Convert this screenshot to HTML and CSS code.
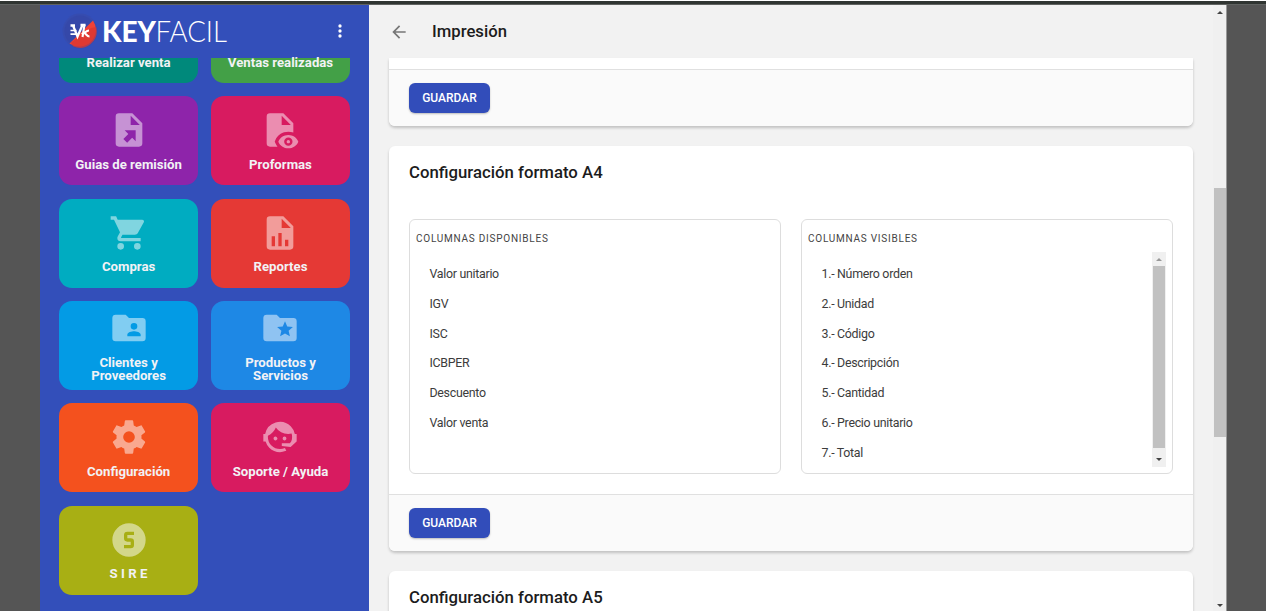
FILE: index.html
```html
<!DOCTYPE html>
<html lang="es">
<head>
<meta charset="utf-8">
<title>Keyfacil - Impresión</title>
<link rel="stylesheet" href="styles.css">
</head>
<body>
<div class="topline"></div>
<div class="app">
  <aside class="sidebar">
    <header class="brand">
      <svg class="emblem" width="36" height="36" viewBox="0 0 36 36">
        <circle cx="18" cy="18" r="17.500" fill="#384ba8" opacity=".6"/>
        <circle cx="18" cy="18" r="15.500" fill="#3546a5" opacity=".6"/>
        <path d="M31 7.500A16.700 16.700 0 0 1 7.500 30.500z" fill="#f04236"/>
        <path d="M29 15l5.200-1A16.700 16.700 0 0 1 11 33.200L9 29.500z" fill="#d93731" opacity=".75"/>
        <g fill="none" stroke="#fff">
          <path d="M11 12.500l4.500 11L20.500 12M18.500 12h5M8.500 12.500h4.500" stroke-width="2.300"/>
          <path d="M8.500 17.500h6M8.500 21.200h6.500" stroke-width="1.700"/>
          <path d="M22.500 11.500L20.500 24M27 17.500c-2 0-3.500 1.500-5 2.500 2 0 2.500 3.500 5.500 3.500" stroke-width="2.100"/>
        </g>
      </svg>
      <svg class="wordmark" width="128" height="40" viewBox="0 0 128 40">
        <text class="word-bold" x="0" y="30.500" textLength="54" lengthAdjust="spacingAndGlyphs">KEY</text>
        <text class="word-light" x="53.500" y="30.500" textLength="71.500" lengthAdjust="spacingAndGlyphs">FACIL</text>
      </svg>
      <svg class="dots" width="20" height="20" viewBox="0 0 24 24"><path d="M12 16a2 2 0 1 1 0 4 2 2 0 0 1 0-4m0-6a2 2 0 1 1 0 4 2 2 0 0 1 0-4m0-6a2 2 0 1 1 0 4 2 2 0 0 1 0-4z"/></svg>
    </header>
    <nav class="tiles">
      <a class="tile cut teal"><span>Realizar venta</span></a>
      <a class="tile cut green"><span>Ventas realizadas</span></a>
      <a class="tile purple"><svg viewBox="0 0 24 24"><path fill-rule="evenodd" d="M14 2H6a2 2 0 0 0-2 2v16a2 2 0 0 0 2 2h12a2 2 0 0 0 2-2V8l-6-6m-1 7V3.500L18.500 9H13M16 12.200H9.400l2.200 2.200-3 3 2.300 2.300 3-3 2.100 2.100z"/></svg><span>Guias de remisión</span></a>
      <a class="tile pink"><svg viewBox="0 0 24 24"><path fill-rule="evenodd" d="M17 18c.56 0 1 .44 1 1s-.44 1-1 1-1-.44-1-1 .44-1 1-1m0-3c-2.730 0-5.060 1.660-6 4 .94 2.340 3.270 4 6 4s5.060-1.660 6-4c-.94-2.340-3.270-4-6-4m0 6.500a2.500 2.500 0 0 1 0-5 2.500 2.500 0 0 1 0 5M9.270 20l-.44-1 .41-1c1.180-3 4.150-5 7.760-5 1.050 0 2.060.21 3 .56V8l-6-6H6a2 2 0 0 0-2 2v16a2 2 0 0 0 2 2h4.500a8.150 8.150 0 0 1-1.230-2M13 3.500L18.500 9H13z"/></svg><span>Proformas</span></a>
      <a class="tile cyan"><svg viewBox="0 0 24 24"><path d="M17 18a2 2 0 1 1 0 4 2 2 0 0 1 0-4M1 2h3.270l.94 2H20a1 1 0 0 1 1 1c0 .17-.05.34-.12.500l-3.580 6.470c-.34.61-1 1.030-1.750 1.030H8.100l-.9 1.630-.03.120a.25.25 0 0 0 .25.25H19v2H7a2 2 0 0 1-2-2c0-.35.09-.68.240-.96l1.360-2.450L3 4H1V2m6 16a2 2 0 1 1 0 4 2 2 0 0 1 0-4z"/></svg><span>Compras</span></a>
      <a class="tile red"><svg viewBox="0 0 24 24"><path fill-rule="evenodd" d="M13 9h5.500L13 3.500V9M6 2h8l6 6v12a2 2 0 0 1-2 2H6a2 2 0 0 1-2-2V4a2 2 0 0 1 2-2m1 18h2v-6H7v6m4 0h2v-8h-2v8m4 0h2v-4h-2v4z"/></svg><span>Reportes</span></a>
      <a class="tile sky"><svg viewBox="0 0 24 24"><path fill-rule="evenodd" d="M19 17h-8v-1c0-1.330 2.670-2 4-2s4 .67 4 2M15 9a2 2 0 1 1 0 4 2 2 0 0 1 0-4m5-3h-8l-2-2H4a2 2 0 0 0-2 2v12a2 2 0 0 0 2 2h16a2 2 0 0 0 2-2V8a2 2 0 0 0-2-2z"/></svg><span>Clientes y<br>Proveedores</span></a>
      <a class="tile blue"><svg viewBox="0 0 24 24"><path fill-rule="evenodd" d="M20 6h-8l-2-2H4a2 2 0 0 0-2 2v12a2 2 0 0 0 2 2h16a2 2 0 0 0 2-2V8a2 2 0 0 0-2-2m-2.060 11L15 15.280 12.060 17l.78-3.330-2.590-2.240 3.410-.29L15 8l1.340 3.140 3.410.29-2.590 2.240z"/></svg><span>Productos y<br>Servicios</span></a>
      <a class="tile orange"><svg viewBox="0 0 24 24"><path d="M12 15.500A3.500 3.500 0 0 1 8.500 12 3.500 3.500 0 0 1 12 8.500a3.500 3.500 0 0 1 3.500 3.500 3.500 3.500 0 0 1-3.500 3.500m7.430-2.530c.04-.32.07-.64.07-.97s-.03-.66-.07-1l2.110-1.630c.19-.15.24-.42.12-.64l-2-3.460c-.12-.22-.39-.31-.61-.22l-2.490 1c-.52-.39-1.060-.73-1.690-.98l-.37-2.650A.506.506 0 0 0 14 2h-4c-.25 0-.46.18-.5.420l-.37 2.650c-.63.25-1.170.59-1.690.98l-2.490-1c-.22-.09-.49 0-.61.22l-2 3.460c-.13.22-.07.49.12.64L4.570 11c-.04.34-.07.67-.07 1s.03.65.07.97l-2.110 1.660c-.19.15-.25.42-.12.64l2 3.460c.12.22.39.3.61.22l2.490-1.010c.52.4 1.060.74 1.690.99l.37 2.650c.04.24.25.42.5.420h4c.25 0 .46-.18.5-.42l.37-2.650c.63-.26 1.170-.59 1.690-.99l2.490 1.010c.22.08.49 0 .61-.22l2-3.460c.12-.22.07-.49-.12-.64z"/></svg><span>Configuración</span></a>
      <a class="tile pink"><svg viewBox="0 0 24 24"><path d="M18.720 14.760c.35-.85.54-1.760.54-2.760 0-.72-.11-1.410-.3-2.050-.65.15-1.330.23-2.040.23A9.070 9.070 0 0 1 9.500 6.340a9.210 9.210 0 0 1-4.730 4.880c-.04.25-.04.52-.04.78A7.270 7.270 0 0 0 12 19.270c1.050 0 2.060-.23 2.970-.64.57 1.090.83 1.630.81 1.630-1.640.55-2.910.82-3.780.82-2.420 0-4.730-.95-6.430-2.660a9.030 9.030 0 0 1-2.240-3.690H2v-4.550h1.090a9.090 9.090 0 0 1 15.330-4.600 8.991 8.991 0 0 1 2.470 4.600H22v4.550h-.06L18.380 18l-5.300-.6v-1.670h4.830l.81-.97m-9.450-2.990c.3 0 .59.12.8.34a1.136 1.136 0 0 1 0 1.600c-.21.21-.5.330-.8.330-.63 0-1.140-.5-1.140-1.130 0-.63.51-1.140 1.140-1.140m5.450 0c.63 0 1.130.51 1.130 1.140 0 .63-.5 1.130-1.130 1.130-.63 0-1.140-.5-1.140-1.130a1.140 1.140 0 0 1 1.140-1.140z"/></svg><span>Soporte / Ayuda</span></a>
      <a class="tile olive"><svg viewBox="0 0 24 24"><path fill-rule="evenodd" d="M11 7a2 2 0 0 0-2 2v2a2 2 0 0 0 2 2h2v2H9v2h4a2 2 0 0 0 2-2v-2a2 2 0 0 0-2-2h-2V9h4V7h-4m1-5a10 10 0 0 1 0 20 10 10 0 0 1 0-20z"/></svg><span class="spaced">SIRE</span></a>
    </nav>
  </aside>
  <main class="main">
    <header class="page-head">
      <svg class="back" width="20" height="20" viewBox="0 0 24 24"><path d="M20 11H7.830l5.590-5.590L12 4l-8 8 8 8 1.410-1.410L7.830 13H20v-2z"/></svg>
      <h1>Impresión</h1>
    </header>
    <section class="card first">
      <div class="stub"></div>
      <footer class="card-foot"><button class="save">GUARDAR</button></footer>
    </section>
    <section class="card">
      <h2>Configuración formato A4</h2>
      <div class="lists">
        <div class="list">
          <h3>COLUMNAS DISPONIBLES</h3>
          <ul><li>Valor unitario</li><li>IGV</li><li>ISC</li><li>ICBPER</li><li>Descuento</li><li>Valor venta</li></ul>
        </div>
        <div class="list">
          <h3>COLUMNAS VISIBLES</h3>
          <div class="scroll-area">
            <ul><li>1.- Número orden</li><li>2.- Unidad</li><li>3.- Código</li><li>4.- Descripción</li><li>5.- Cantidad</li><li>6.- Precio unitario</li><li>7.- Total</li></ul>
            <div class="bar inner"><i class="up faded"></i><b></b><i class="down"></i></div>
          </div>
        </div>
      </div>
      <footer class="card-foot"><button class="save">GUARDAR</button></footer>
    </section>
    <section class="card">
      <h2>Configuración formato A5</h2>
    </section>
  </main>
  <div class="bar outer"><i class="up"></i><b></b><i class="down"></i></div>
</div>
</body>
</html>
```
FILE: styles.css
```css
* { box-sizing: border-box; }
body { margin: 0; height: 611px; overflow: hidden; background: #555; font-family: Roboto, "Liberation Sans", sans-serif; }
h1, h2, h3, ul { margin: 0; padding: 0; font-weight: 500; list-style: none; }
.topline { height: 5px; background: #303532; border-top: 1px solid #fff; border-bottom: 1px solid #606361; }
.app { display: flex; width: 1187px; height: 606px; margin-left: 40px; border-right: 1px solid #999; }

.sidebar { width: 329px; background: #334fba; overflow: hidden; }
.brand { height: 52.500px; display: flex; align-items: center; padding-left: 22px; }
.emblem { flex: none; }
.wordmark { margin-left: 3.500px; fill: #fff; }
.word-bold { font: 900 29px Lato, sans-serif; }
.word-light { font: 300 29px Lato, sans-serif; }
.dots { margin-left: 100px; fill: #fff; }
.tiles { display: grid; grid-template-columns: 138.600px 138.600px; grid-template-rows: 25.600px; grid-auto-rows: 89px; gap: 13.300px; padding-left: 19.300px; }
.tile { display: flex; flex-direction: column; align-items: center; justify-content: center; border-radius: 13px; color: #f2f2f5; font-size: 13.200px; line-height: 13.300px; font-weight: 700; text-align: center; }
.tile svg { width: 40px; height: 40px; margin-bottom: 7.500px; fill: #fff; opacity: .5; }
.tile.cut { border-radius: 0 0 13px 13px; justify-content: flex-start; }
.tile.cut span { margin-top: -1.500px; }
.spaced { letter-spacing: 3.300px; padding-left: 3px; }
.teal { background: #00897b; }
.green { background: #43a047; }
.purple { background: #8e24aa; }
.pink { background: #d81b60; }
.cyan { background: #00acc1; }
.red { background: #e53935; }
.sky { background: #039be5; }
.blue { background: #1e88e5; }
.orange { background: #f4511e; }
.olive { background: #a8af14; }

.main { width: 844px; padding-left: 20px; padding-right: 20px; background: #f2f2f2; overflow: hidden; }
.page-head { height: 53px; display: flex; align-items: center; gap: 23px; }
.page-head h1 { font-size: 16.700px; color: #1c1c1c; }
.back { fill: #777; }
.card { width: 804px; margin-bottom: 20px; border-radius: 6px; background: #fff; box-shadow: 0 2px 3px rgba(0,0,0,.2); overflow: hidden; }
.card.first { border-radius: 0 0 6px 6px; }
.stub { height: 11px; }
.card h2 { padding: 16px 20px 0; height: 73px; font-size: 16.750px; line-height: 21px; color: #1c1c1c; }
.card-foot { height: 57px; padding: 13px 20px; background: #fafafa; border-top: 1px solid #e0e0e0; }
.save { display: block; width: 81px; height: 30px; padding: 0; border: 0; border-radius: 6px; background: #324dba; color: #fff; font: 500 12px/30px Roboto, sans-serif; box-shadow: 0 1px 2px rgba(0,0,0,.25); }
.lists { display: grid; grid-template-columns: 372px 372px; gap: 20px; padding: 0 20px 20px; }
.list { height: 255px; border: 1px solid #ddd; border-radius: 6px; padding: 0 6px; }
.list h3 { padding-top: 11px; height: 32px; font-size: 10px; line-height: 16px; font-weight: 400; letter-spacing: .76px; color: #444; }
.list ul { flex: 1; padding: 7px 0 0 13.500px; }
.list li { height: 29.750px; font-size: 12.400px; letter-spacing: -.29px; font-weight: 400; line-height: 30px; color: #3c3c3c; }
.scroll-area { display: flex; height: 215px; }

.bar { display: flex; flex-direction: column; align-items: center; background: #f0f0f0; }
.bar b { width: 12px; background: #c1c1c1; }
.bar i { width: 0; height: 0; border: 3px solid transparent; }
.bar .up { border-top: 0; border-bottom-color: #444; }
.bar .down { border-bottom: 0; border-top-color: #444; margin-top: auto; }
.bar .faded { border-bottom-color: #999; }
.inner { width: 14px; padding: 6px 0; }
.inner b { height: 182px; margin-top: 5px; }
.outer { width: 13px; padding: 6px 0 4px; }
.outer b { height: 249px; margin-top: 174px; }
```
